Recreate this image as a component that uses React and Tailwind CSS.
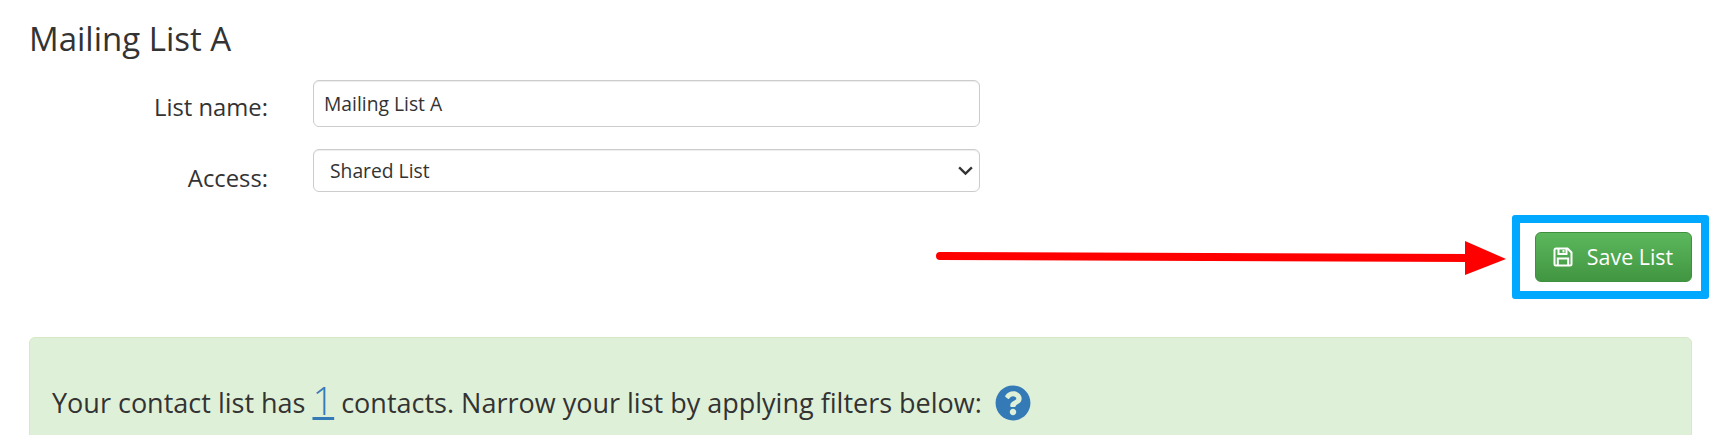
import { FaQuestionCircle } from "react-icons/fa";

const font = "font-['Open_Sans',sans-serif]";

function Field({ label, labelClass, children, className }) {
    return (
        <div className={`flex items-start ${className}`}>
            <label className={`w-[239px] text-right text-[23.8px] leading-[28px] text-[#333] ${labelClass}`}>{label}</label>
            <div className="ml-[45px] w-[667px]">{children}</div>
        </div>
    );
}

function SaveIcon() {
    return (
        <svg viewBox="0 0 20 20" className="h-[20px] w-[20px]" fill="none" stroke="currentColor" strokeWidth="2">
            <path d="M3 1.500h11.500l4 4V17a1.500 1.500 0 0 1-1.500 1.500H3A1.500 1.500 0 0 1 1.500 17V3A1.500 1.500 0 0 1 3 1.500z" />
            <path d="M5.500 1.500v5.500h8V1.500" />
            <path d="M4.800 18.500v-7h10.400v7" />
            <path d="M10.500 3v2.500" />
        </svg>
    );
}

export default function App() {
    return (
        <div className={`relative h-[435px] w-[1722px] overflow-hidden bg-white text-[#333] ${font}`}>
            <div className="pl-[29px] pr-[30px] pt-[17px]">
                <h3 className="text-[33px] leading-[44px]">Mailing List A</h3>

                <Field label="List name:" labelClass="pt-[13px]" className="mt-[19px]">
                    <input
                        readOnly
                        value="Mailing List A"
                        className="h-[47px] w-full rounded-md border border-[#ccc] px-[10px] pb-[1px] text-[19.3px] text-[#333] shadow-[inset_0_1px_1px_rgba(0,0,0,0.075)]"
                    />
                </Field>

                <Field label="Access:" labelClass="pt-[15px]" className="mt-[22px]">
                    <div className="relative flex h-[43px] w-full items-center rounded-md border border-[#ccc] pl-[16px] pt-[1px] text-[19.3px] shadow-[inset_0_1px_1px_rgba(0,0,0,0.075)]">
                        Shared List
                        <svg viewBox="0 0 16 16" className="absolute right-[5px] top-[12px] h-[17px] w-[17px]">
                            <path d="M2 5l6 6 6-6" fill="none" stroke="#333" strokeWidth="2.200" />
                        </svg>
                    </div>
                </Field>

                <div className="mt-[40px] flex justify-end">
                    <button className="flex h-[50px] w-[157px] items-center justify-center gap-[14px] rounded-md border border-[#3e8f3e] bg-linear-to-b from-[#5cb85c] to-[#419641] pr-[1px] text-[21.4px] text-white">
                        <SaveIcon />
                        Save List
                    </button>
                </div>

                <div className="mt-[55px] h-[120px] rounded-t-md border border-[#d6e9c6] bg-[#dff0d8] px-[22px] pt-[42px]">
                    <p className="flex items-center text-[27px] leading-[40px] text-[#333]">
                        Your contact list has&nbsp;
                        <a className="mb-[6px] text-[38px] font-light leading-[40px] text-[#337ab7] underline">1</a>
                        &nbsp;contacts. Narrow your list by applying filters below:
                        <FaQuestionCircle size={36} className="ml-[13px] text-[#337ab7]" />
                    </p>
                </div>
            </div>

            {/* annotations */}
            <div className="absolute left-[1512px] top-[215px] h-[84px] w-[197px] rounded-[3px] border-[8px] border-[#00a8ff]" />
            <svg className="absolute left-0 top-0" width="1722" height="435">
                <line x1="940" y1="256" x2="1470" y2="258" stroke="#ff0000" strokeWidth="8" strokeLinecap="round" />
                <polygon points="1465,241 1506,259 1465,275" fill="#ff0000" />
            </svg>
        </div>
    );
}
